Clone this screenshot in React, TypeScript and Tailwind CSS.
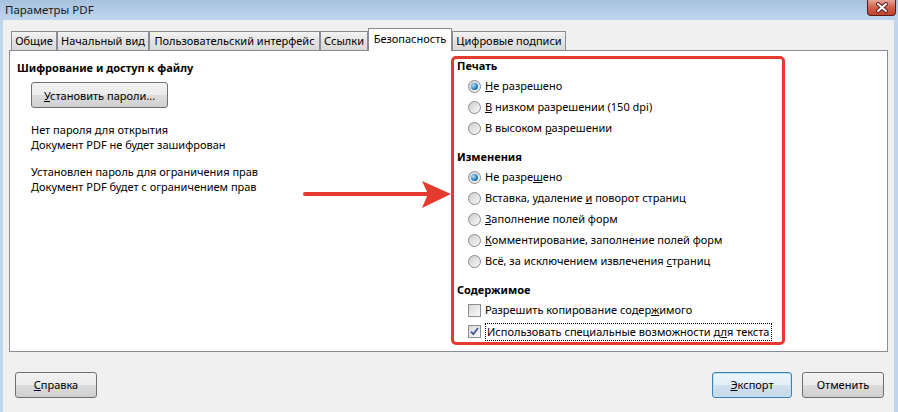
import React from 'react';

const tabs = [
  { label: 'Общие', w: 'w-[46px]' },
  { label: 'Начальный вид', w: 'w-[92px]' },
  { label: 'Пользовательский интерфейс', w: 'w-[171px]' },
  { label: 'Ссылки', w: 'w-[48px]' },
  { label: 'Безопасность', w: 'w-[84px]', active: true },
  { label: 'Цифровые подписи', w: 'w-[114px]' },
];

const Radio: React.FC<{ checked?: boolean }> = ({ checked }) => (
  <span className="flex h-[13px] w-[13px] shrink-0 items-center justify-center rounded-full border border-[#8b8b8b] bg-[linear-gradient(135deg,#cfcfcf,#f8f8f8)]">
    {checked && (
      <span className="h-[7px] w-[7px] rounded-full bg-[radial-gradient(circle_at_35%_35%,#b4e4fb,#2b82c4_55%,#0e4477)]" />
    )}
  </span>
);

const Check: React.FC<{ checked?: boolean }> = ({ checked }) => (
  <span className="flex h-[13px] w-[13px] shrink-0 items-center justify-center border border-[#8e8f8f] bg-[linear-gradient(135deg,#d8d8d8,#fbfbfb)]">
    {checked && (
      <svg width="9" height="9" viewBox="0 0 9 9">
        <path d="M1 4.6 L3.4 7.2 L8 1" fill="none" stroke="#3f5395" strokeWidth="1.7" />
      </svg>
    )}
  </span>
);

const Row: React.FC<{ children: React.ReactNode }> = ({ children }) => (
  <div className="flex h-[21px] items-center gap-[4px] whitespace-nowrap pl-[14px]">{children}</div>
);

const Heading: React.FC<{ children: React.ReactNode; first?: boolean }> = ({ children, first }) => (
  <div className={`h-[17px] pl-[3px] font-bold leading-[14px] ${first ? '' : 'mt-[11px]'}`}>{children}</div>
);

const Button: React.FC<{ children: React.ReactNode; w: string; primary?: boolean }> = ({ children, w, primary }) => (
  <div
    className={`flex h-[26px] ${w} items-center justify-center whitespace-nowrap rounded-[3px] border ${
      primary
        ? 'border-[#3c7fb1] bg-[linear-gradient(#eef6fc,#e3eef7_50%,#cfe0ee_51%,#c6d9ea)] shadow-[inset_0_0_0_1px_#bde3fa]'
        : 'border-[#707070] bg-[linear-gradient(#f2f2f2,#ebebeb_50%,#dddddd_51%,#cfcfcf)]'
    }`}
  >
    {children}
  </div>
);

export default function App() {
  return (
    <div className="flex h-[412px] w-[898px] flex-col whitespace-nowrap bg-[#c1d6ed] font-['Noto_Sans',sans-serif] text-[11px] text-black">
      {/* Title bar */}
      <div className="flex h-[20px] shrink-0 items-start justify-between bg-[linear-gradient(#a7c1de,#bfd5ed)] pl-[5px] pr-[2px]">
        <span className="mt-[2px] text-[11.5px] leading-[16px] text-[#1b1b1b]">Параметры PDF</span>
        <div className="flex h-[16px] w-[29px] items-center justify-center rounded-b-[4px] border border-t-0 border-[#5c1a1a] bg-[linear-gradient(#e6a698,#d0604c_50%,#c2412e)]">
          <svg width="14" height="11" viewBox="0 0 14 11">
            <path d="M3 2 L11 9 M11 2 L3 9" stroke="#5a2020" strokeWidth="4" strokeLinecap="round" />
            <path d="M3 2 L11 9 M11 2 L3 9" stroke="#ffffff" strokeWidth="2" strokeLinecap="round" />
          </svg>
        </div>
      </div>

      {/* Window body */}
      <div className="ml-[3px] mr-[4px] flex-1 bg-[#f0f0f0] px-[6px] pt-[8px]">
        {/* Tabs */}
        <div className="ml-[2px] flex items-end">
          {tabs.map((t) =>
            t.active ? (
              <div
                key={t.label}
                className={`relative z-10 -mb-px flex h-[23px] ${t.w} items-center justify-center border border-b-0 border-[#898c95] bg-white pb-[2px]`}
              >
                {t.label}
              </div>
            ) : (
              <div
                key={t.label}
                className={`flex h-[19px] ${t.w} items-center justify-center border border-b-0 border-[#898c95] bg-[linear-gradient(#f3f3f3,#e3e3e3_50%,#d9d9d9)]`}
              >
                {t.label}
              </div>
            )
          )}
        </div>

        {/* Panel */}
        <div className="relative flex h-[302px] border border-[#898c95] bg-white">
          <div className="w-[441px] pl-[7px] pt-[9px] leading-[15px]">
            <div className="font-bold">Шифрование и доступ к файлу</div>
            <div className="ml-[14px] mt-[7px]">
              <Button w="w-[137px]">
                <span>
                  <u>У</u>становить пароли...
                </span>
              </Button>
            </div>
            <div className="ml-[14px] mt-[14px]">
              <div>Нет пароля для открытия</div>
              <div>Документ PDF не будет зашифрован</div>
            </div>
            <div className="ml-[14px] mt-[12px]">
              <div>Установлен пароль для ограничения прав</div>
              <div>Документ PDF будет с ограничением прав</div>
            </div>
          </div>

          <div className="mt-[5px] h-[289px] w-[334px] rounded-[5px] border-[3px] border-[#e53a2e]">
            <Heading first>Печать</Heading>
            <Row>
              <Radio checked />
              <span>
                <u>Н</u>е разрешено
              </span>
            </Row>
            <Row>
              <Radio />
              <span>
                <u>В</u> низком разрешении (150 dpi)
              </span>
            </Row>
            <Row>
              <Radio />
              <span>
                В высоком <u>р</u>азрешении
              </span>
            </Row>

            <Heading>Изменения</Heading>
            <Row>
              <Radio checked />
              <span>
                Не разре<u>ш</u>ено
              </span>
            </Row>
            <Row>
              <Radio />
              <span>
                Вставка, удаление <u>и</u> поворот страниц
              </span>
            </Row>
            <Row>
              <Radio />
              <span>
                <u>З</u>аполнение полей форм
              </span>
            </Row>
            <Row>
              <Radio />
              <span>
                <u>К</u>омментирование, заполнение полей форм
              </span>
            </Row>
            <Row>
              <Radio />
              <span>
                Всё, за исключением извлечения <u>с</u>траниц
              </span>
            </Row>

            <Heading>Содержимое</Heading>
            <Row>
              <Check />
              <span>
                Разрешить копирование содер<u>ж</u>имого
              </span>
            </Row>
            <Row>
              <Check checked />
              <span className="border border-dotted border-black px-px leading-[16px]">
                Использовать специальные возможности д<u>л</u>я текста
              </span>
            </Row>
          </div>

          {/* annotation arrow */}
          <svg className="absolute left-[290px] top-[127px]" width="152" height="32" viewBox="0 0 152 32">
            <line x1="5" y1="16" x2="128" y2="16" stroke="#e53a2e" strokeWidth="4" strokeLinecap="round" />
            <polygon points="122,3 151,16 122,30 128,16" fill="#e53a2e" />
          </svg>
        </div>

        {/* Bottom buttons */}
        <div className="mt-[20px] flex items-center pl-[6px] pr-[4px]">
          <Button w="w-[82px]">
            <span>
              <u>С</u>правка
            </span>
          </Button>
          <div className="flex-1" />
          <Button w="w-[80px]" primary>
            <span>
              <u>Э</u>кспорт
            </span>
          </Button>
          <div className="ml-[10px]">
            <Button w="w-[82px]">Отменить</Button>
          </div>
        </div>
      </div>
    </div>
  );
}
